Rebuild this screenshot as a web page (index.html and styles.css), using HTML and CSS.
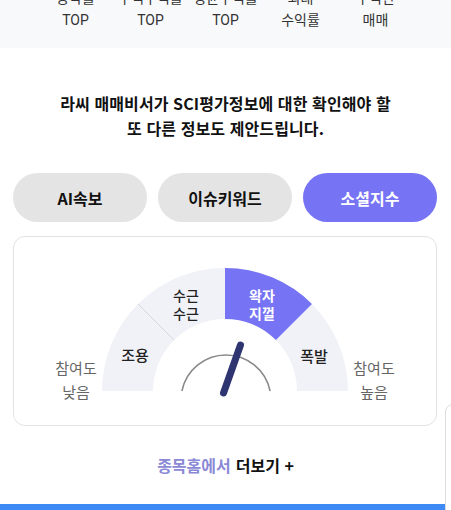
FILE: index.html
```html
<!DOCTYPE html>
<html lang="ko">
<head>
<meta charset="utf-8">
<link rel="stylesheet" href="styles.css">
</head>
<body>
<div class="page">
  <div class="top-strip">
    <div class="rank-row">
      <div class="rank-item">등락률<br>TOP</div>
      <div class="rank-item">누적수익률<br>TOP</div>
      <div class="rank-item">평균수익률<br>TOP</div>
      <div class="rank-item">최대<br>수익률</div>
      <div class="rank-item">수익만<br>매매</div>
    </div>
  </div>

  <h2 class="headline">라씨 매매비서가 SCI평가정보에 대한 확인해야 할<br>또 다른 정보도 제안드립니다.</h2>

  <div class="tabs">
    <button class="tab">AI속보</button>
    <button class="tab">이슈키워드</button>
    <button class="tab active">소셜지수</button>
  </div>

  <div class="card">
    <svg class="gauge" width="422" height="188" viewBox="14 237 422 188">
      <path class="seg" d="M102 391 A123 123 0 0 1 348 391 L297 391 A72 72 0 0 0 153 391 Z"/>
      <path class="seg-on" d="M225 268 A123 123 0 0 1 311.97 304.03 L275.91 340.09 A72 72 0 0 0 225 319 Z"/>
      <line class="divider" x1="138.03" y1="304.03" x2="174.09" y2="340.09"/>
      <path class="dial" d="M181.9 391 A45 45 0 0 1 270.1 391"/>
      <line class="needle" x1="223.5" y1="393" x2="240.5" y2="345"/>
      <text class="edge" x="76" y="367">참여도</text>
      <text class="edge" x="76" y="391">낮음</text>
      <text class="edge" x="374" y="367">참여도</text>
      <text class="edge" x="374" y="391">높음</text>
      <text class="lab" x="135" y="354">조용</text>
      <text class="lab two" x="186" y="295">수근</text>
      <text class="lab two" x="186" y="313">수근</text>
      <text class="lab two on" x="262" y="295">왁자</text>
      <text class="lab two on" x="262" y="313">지껄</text>
      <text class="lab" x="314" y="355">폭발</text>
    </svg>
  </div>

  <div class="more"><span class="more-a">종목홈에서</span> <span class="more-b">더보기 +</span></div>

  <div class="bottom-bar"></div>
  <div class="side-peek"></div>
</div>
</body>
</html>
```

FILE: styles.css
```css
* { box-sizing: border-box; }
html, body { margin: 0; padding: 0; background: #fff; }
body {
  font-family: "Noto Sans CJK KR", "Noto Sans", Roboto, sans-serif;
  color: #111;
  overflow: hidden;
}
.page {
  position: relative;
  width: 451px;
  height: 510px;
  overflow: hidden;
}
.top-strip {
  height: 48px;
  background: #f8f9fb;
  overflow: hidden;
}
.rank-row {
  display: flex;
  padding-left: 38px;
  margin-top: -13px;
}
.rank-item {
  width: 75px;
  text-align: center;
  font-family: Roboto, "Noto Sans CJK KR", sans-serif;
  font-size: 14px;
  line-height: 22px;
  color: #333;
}
.headline {
  margin: 43px 0 0;
  text-align: center;
  font-size: 16px;
  line-height: 25px;
  font-weight: 700;
  color: #111;
  letter-spacing: 0.1px;
}
.tabs {
  display: flex;
  gap: 11px;
  padding: 0 14px 0 13px;
  margin-top: 32px;
}
.tab {
  flex: 1;
  height: 49px;
  border: none;
  border-radius: 25px;
  background: #e4e4e4;
  font-family: "Noto Sans CJK KR", sans-serif;
  font-size: 16px;
  font-weight: 700;
  color: #111;
  padding: 0;
}
.tab.active {
  background: #7673f5;
  color: #fff;
}
.card {
  margin: 14px 14px 0 13px;
  height: 190px;
  border: 1px solid #e2e2e2;
  border-radius: 12px;
  overflow: hidden;
}
.gauge { display: block; }
.seg { fill: #f1f2f8; }
.seg-on { fill: #7673f5; }
.divider { stroke: #d6d7de; stroke-width: 1; }
.dial { fill: none; stroke: #8a8a8a; stroke-width: 1.6; }
.needle { stroke: #2f3570; stroke-width: 7; stroke-linecap: round; }
.gauge text {
  font-family: "Noto Sans CJK KR", sans-serif;
  text-anchor: middle;
  dominant-baseline: central;
  font-size: 15px;
}
.gauge text.two { font-size: 14px; }
.edge { fill: #666; }
.lab { fill: #222; font-weight: 500; }
.lab.on { fill: #fff; font-weight: 700; }
.more {
  height: 78px;
  display: flex;
  align-items: center;
  justify-content: center;
  gap: 5px;
  font-size: 16px;
  font-weight: 700;
}
.more-a { color: #8b89d6; }
.more-b { color: #111; }
.bottom-bar {
  width: 446px;
  height: 6px;
  background: #3d8af7;
}
.side-peek {
  position: absolute;
  left: 445px;
  top: 404px;
  width: 30px;
  height: 120px;
  border: 1px solid #dcdcdc;
  border-radius: 8px;
  background: rgba(255, 255, 255, 0.75);
}
```
